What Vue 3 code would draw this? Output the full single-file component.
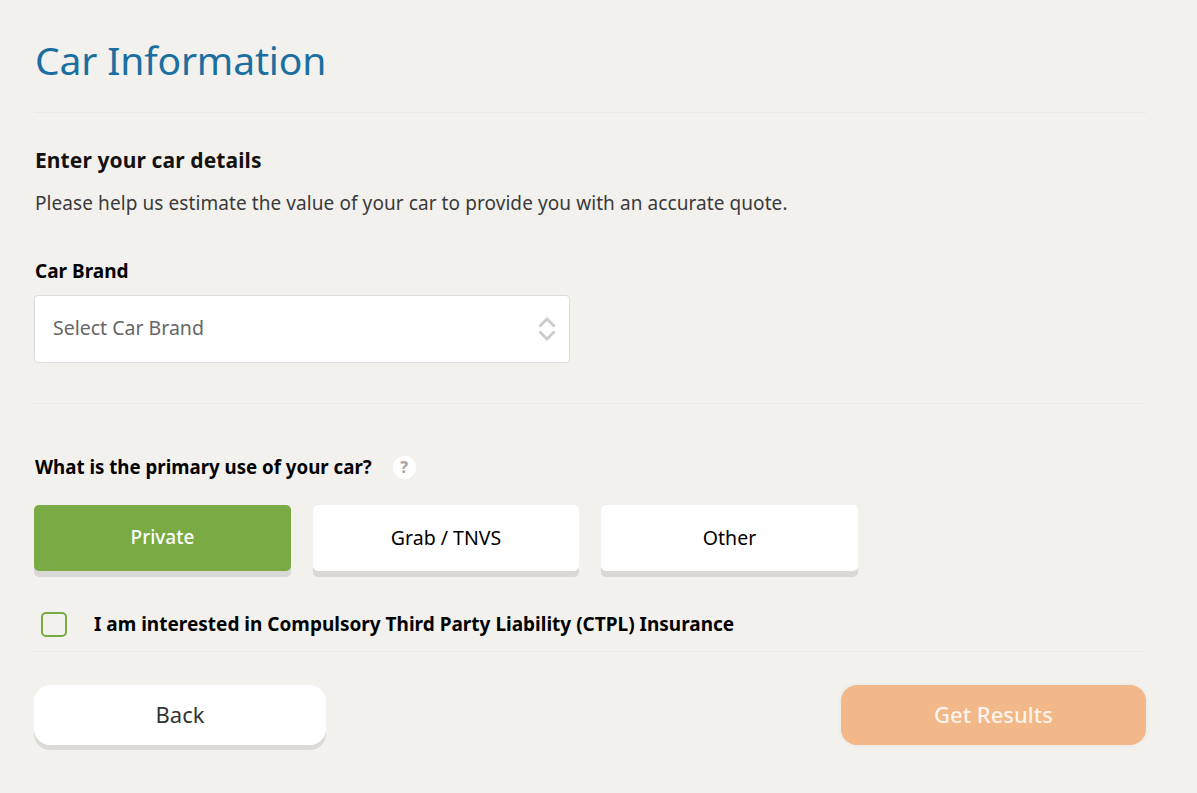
<template>
  <main class="page">
    <h1 class="page-title">Car Information</h1>

    <section class="details">
      <h2>Enter your car details</h2>
      <p>Please help us estimate the value of your car to provide you with an accurate quote.</p>
      <label class="field-label">Car Brand</label>
      <div class="select-box">
        <span class="placeholder">Select Car Brand</span>
        <svg width="20" height="26" viewBox="0 0 20 26" fill="none" stroke="#cbcbce" stroke-width="2.8">
          <path d="M2.5 10.5 10 3l7.500 7.500" />
          <path d="M2.500 15.500 10 23l7.500-7.500" />
        </svg>
      </div>
    </section>

    <section class="usage">
      <div class="question">
        <span>What is the primary use of your car?</span>
        <span class="help">?</span>
      </div>
      <div class="use-options">
        <button
          v-for="option in options"
          :key="option.label"
          type="button"
          class="use-option"
          :class="{ active: option.label === selected }"
          :style="{ width: option.width + 'px' }"
          @click="selected = option.label"
        >
          {{ option.label }}
        </button>
      </div>
      <label class="ctpl">
        <span class="checkbox"></span>
        <span>I am interested in Compulsory Third Party Liability (CTPL) Insurance</span>
      </label>
    </section>

    <footer class="actions">
      <button type="button" class="back">Back</button>
      <button type="button" class="results">Get Results</button>
    </footer>
  </main>
</template>

<script setup>
import { ref } from 'vue'

const selected = ref('Private')
const options = [
  { label: 'Private', width: 257 },
  { label: 'Grab / TNVS', width: 266 },
  { label: 'Other', width: 257 }
]
</script>

<style>
html,
body {
  margin: 0;
  background: #f3f1ee;
}
</style>

<style scoped>
.page {
  box-sizing: border-box;
  width: 1197px;
  height: 793px;
  padding: 0 51px 0 34px;
  background: #f3f1ee;
  color: #000;
  font-family: "Noto Sans", "Open Sans", sans-serif;
}

.page-title {
  height: 113px;
  margin: 0;
  padding: 0 0 0 1px;
  box-sizing: border-box;
  border-bottom: 1px solid #ebe9e6;
  color: #1b6fa0;
  font-size: 39px;
  font-weight: 400;
  letter-spacing: -0.15px;
  line-height: 119px;
}

.details {
  height: 290px;
  border-bottom: 1px solid #ebe9e6;
}

.details h2 {
  margin: 0;
  padding: 33px 0 0 1px;
  color: #14110f;
  font-size: 21px;
  font-weight: 700;
  letter-spacing: 0.1px;
  line-height: 28px;
}

.details p {
  margin: 16px 0 0 1px;
  color: #3a3a3a;
  font-size: 19px;
  letter-spacing: 0.08px;
  line-height: 26px;
}

.field-label {
  display: block;
  margin: 42px 0 0 1px;
  font-size: 19px;
  font-weight: 700;
  line-height: 26px;
}

.select-box {
  display: flex;
  align-items: center;
  justify-content: space-between;
  box-sizing: border-box;
  width: 536px;
  height: 68px;
  margin-top: 11px;
  padding: 0 12px 0 18px;
  border: 1px solid #dcdcdc;
  border-radius: 4px;
  background: #fff;
  color: #666;
  font-size: 19.5px;
}

.placeholder {
  padding-bottom: 4px;
}

.usage {
  height: 247px;
  border-bottom: 1px solid #ebe9e6;
}

.question {
  display: flex;
  align-items: center;
  gap: 21px;
  padding: 51px 0 0 1px;
  font-size: 18.7px;
  font-weight: 700;
  line-height: 24px;
}

.help {
  display: flex;
  align-items: center;
  justify-content: center;
  width: 23px;
  height: 23px;
  border-radius: 50%;
  background: #fff;
  color: #aaa6a6;
  font-size: 16px;
  font-weight: 800;
}

.use-options {
  display: flex;
  gap: 22px;
  margin-top: 26px;
}

.use-option {
  height: 66px;
  padding: 0 0 2px;
  border: 0;
  border-radius: 5px;
  background: #fff;
  box-shadow: 0 6px 0 #d9d8d6;
  color: #000;
  font-family: inherit;
  font-size: 19.5px;
  cursor: pointer;
}

.use-option.active {
  background: #79aa43;
  color: #fff;
  font-size: 19px;
  font-weight: 500;
}

.ctpl {
  display: flex;
  align-items: center;
  gap: 27px;
  margin-top: 41px;
  padding-left: 7px;
  font-size: 19px;
  font-weight: 700;
  line-height: 26px;
}

.ctpl span:last-child {
  margin-top: -1px;
}

.checkbox {
  box-sizing: border-box;
  width: 26px;
  height: 25px;
  border: 2px solid #79aa43;
  border-radius: 5px;
}

.actions {
  display: flex;
  justify-content: space-between;
  padding-top: 33px;
}

.actions button {
  height: 60px;
  padding: 0 0 2px;
  border: 0;
  border-radius: 16px;
  font-family: inherit;
  font-size: 22px;
  cursor: pointer;
}

.back {
  width: 292px;
  background: #fff;
  box-shadow: 0 5px 0 #dcdad5;
  color: #333;
}

.results {
  width: 305px;
  background: #f2b88a;
  box-shadow: 0 0 4px rgba(0, 0, 0, 0.06);
  color: #fdf3ea;
  font-weight: 500;
}
</style>
